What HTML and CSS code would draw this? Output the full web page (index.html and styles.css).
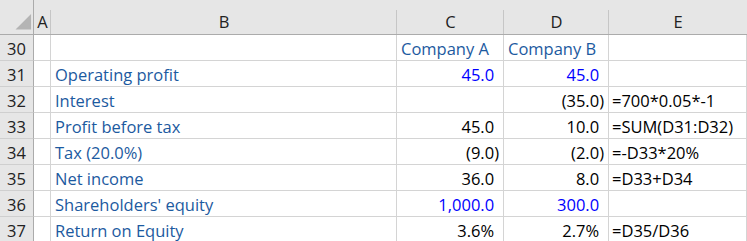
FILE: index.html
```html
<!DOCTYPE html>
<html>
<head>
<meta charset="utf-8">
<link rel="stylesheet" href="styles.css">
</head>
<body>
<div class="sheet">
  <div class="corner"><svg class="tri" width="34" height="35" viewBox="0 0 34 35"><polygon points="16,31 32,31 32,15" fill="#b4b4b4"/></svg></div>
  <div class="ch">A</div>
  <div class="ch">B</div>
  <div class="ch">C</div>
  <div class="ch">D</div>
  <div class="ch last">E</div>

  <div class="rh">30</div><div class="c"></div><div class="c"></div>
  <div class="c lbl">Company A</div><div class="c lbl">Company B</div><div class="c"></div>

  <div class="rh">31</div><div class="c"></div><div class="c lbl">Operating profit</div>
  <div class="c num inp">45.0<span class="pad">)</span></div><div class="c num inp">45.0<span class="pad">)</span></div><div class="c"></div>

  <div class="rh">32</div><div class="c"></div><div class="c lbl">Interest</div>
  <div class="c num"></div><div class="c num">(35.0)</div><div class="c fx">=700*0.05*-1</div>

  <div class="rh">33</div><div class="c"></div><div class="c lbl">Profit before tax</div>
  <div class="c num">45.0<span class="pad">)</span></div><div class="c num">10.0<span class="pad">)</span></div><div class="c fx">=SUM(D31:D32)</div>

  <div class="rh">34</div><div class="c"></div><div class="c lbl">Tax (20.0%)</div>
  <div class="c num">(9.0)</div><div class="c num">(2.0)</div><div class="c fx">=-D33*20%</div>

  <div class="rh">35</div><div class="c"></div><div class="c lbl">Net income</div>
  <div class="c num">36.0<span class="pad">)</span></div><div class="c num">8.0<span class="pad">)</span></div><div class="c fx">=D33+D34</div>

  <div class="rh">36</div><div class="c"></div><div class="c lbl">Shareholders' equity</div>
  <div class="c num inp">1,000.0<span class="pad">)</span></div><div class="c num inp">300.0<span class="pad">)</span></div><div class="c"></div>

  <div class="rh">37</div><div class="c"></div><div class="c lbl">Return on Equity</div>
  <div class="c num">3.6%<span class="pad">)</span></div><div class="c num">2.7%<span class="pad">)</span></div><div class="c fx">=D35/D36</div>
</div>
</body>
</html>
```
FILE: styles.css
```css
html, body {
  margin: 0;
  padding: 0;
  background: #ffffff;
}
.sheet {
  display: grid;
  grid-template-columns: 34px 17px 346px 107px 105px 1fr;
  grid-template-rows: 35px repeat(8, 26px);
  font-family: "Open Sans", sans-serif;
  font-size: 16.5px;
  line-height: 22px;
  color: #000;
  width: 747px;
  overflow: hidden;
}
.sheet > div {
  box-sizing: border-box;
  display: flex;
  align-items: flex-end;
  white-space: nowrap;
  overflow: hidden;
}
.corner {
  background: #e6e6e6;
  border-right: 1px solid #ababab;
  border-bottom: 1px solid #ababab;
}
.tri {
  display: block;
}
.ch {
  background: linear-gradient(#c6c6c6, #c6c6c6) right bottom / 1px 24px no-repeat, #e6e6e6;
  border-bottom: 1px solid #ababab;
  justify-content: center;
  padding-bottom: 1px;
  color: #222;
}
.ch.last {
  background: #e6e6e6;
}
.rh {
  background: #e6e6e6;
  border-right: 1px solid #ababab;
  border-bottom: 1px solid #cfcfcf;
  justify-content: center;
  padding-bottom: 0;
  color: #222;
}
.c {
  border-right: 1px solid #d4d4d4;
  border-bottom: 1px solid #d4d4d4;
  padding: 0 4px 0 4px;
}
.lbl {
  color: #1c5aa0;
  padding-left: 4px;
}
.num {
  justify-content: flex-end;
}
.inp {
  color: #0000ff;
}
.fx {
  padding-left: 3px;
}
.pad {
  visibility: hidden;
}
```
